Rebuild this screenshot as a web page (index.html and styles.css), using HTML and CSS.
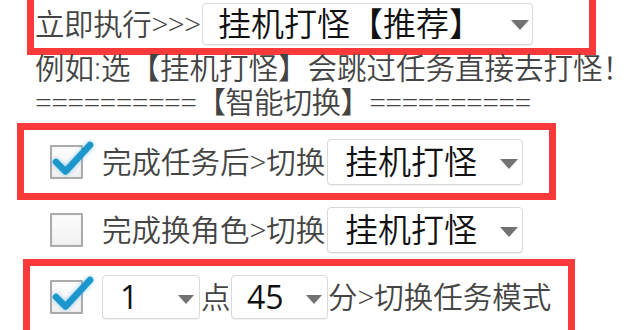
FILE: index.html
```html
<!DOCTYPE html>
<html lang="zh-CN">
<head>
<meta charset="utf-8">
<link rel="stylesheet" href="styles.css">
</head>
<body>
<div class="frame f1">
  <div class="row r1">
    <span class="lbl">立即执行&gt;&gt;&gt;</span>
    <div class="sel s-top"><span class="val">挂机打怪【推荐】</span><i class="arr"></i></div>
  </div>
</div>
<div class="line note">例如:选【挂机打怪】会跳过任务直接去打怪！</div>
<div class="line sep">==========【智能切换】==========</div>
<div class="frame f2">
  <div class="row r2">
    <span class="cb on"><svg class="tick" viewBox="0 0 44 40"><path d="M6 21 L15.5 30.5 L40 4"/></svg></span>
    <span class="lbl">完成任务后&gt;切换</span>
    <div class="sel s-mode"><span class="val">挂机打怪</span><i class="arr"></i></div>
  </div>
</div>
<div class="row r3">
  <span class="cb"></span>
  <span class="lbl">完成换角色&gt;切换</span>
  <div class="sel s-mode"><span class="val">挂机打怪</span><i class="arr"></i></div>
</div>
<div class="frame f3">
  <div class="row r4">
    <span class="cb on"><svg class="tick" viewBox="0 0 44 40"><path d="M6 21 L15.5 30.5 L40 4"/></svg></span>
    <div class="sel s-h"><span class="val num">1</span><i class="arr"></i></div>
    <span class="lbl unit">点</span>
    <div class="sel s-m"><span class="val num">45</span><i class="arr"></i></div>
    <span class="lbl">分&gt;切换任务模式</span>
  </div>
</div>
</body>
</html>
```
FILE: styles.css
```css
* { box-sizing: border-box; }
html, body { margin: 0; padding: 0; background: #fff; }
body {
  width: 639px;
  height: 330px;
  overflow: hidden;
  font-family: "Open Sans", "Noto Sans CJK SC", sans-serif;
  font-size: 29.5px;
  font-weight: 350;
  color: #444;
}
.frame {
  border: 7px solid #fa3a3a;
}
.f1 {
  margin: -8px 0 0 27px;
  width: 569px;
  height: 63px;
}
.f2 {
  margin: 4px 0 0 17px;
  width: 539px;
  height: 77px;
}
.f3 {
  margin: 0 0 0 23px;
  width: 552px;
  height: 80px;
}
.row {
  display: flex;
  align-items: center;
}
.r1 { height: 49px; padding-left: 1px; }
.r1 .lbl { width: 167px; letter-spacing: -0.4px; }
.r2 { height: 63px; padding-left: 26px; }
.r3 { height: 59px; padding-left: 50px; }
.r4 { height: 62px; padding-left: 20px; }
.lbl { white-space: nowrap; line-height: 1; }
.r2 .lbl, .r3 .lbl { width: 225px; margin-left: 19px; }
.unit { width: 31px; padding-left: 1px; }
.line {
  white-space: nowrap;
  height: 34px;
  line-height: 34px;
  padding-left: 35px;
}
.note { margin-top: -4px; }
.sep { letter-spacing: -0.7px; }

.sel {
  position: relative;
  display: flex;
  align-items: center;
  background: #fff;
  border: 1px solid #d9d9d9;
  border-radius: 4px;
  box-shadow: 0 1px 1px rgba(0,0,0,0.06);
  color: #111;
  font-size: 33px;
  white-space: nowrap;
}
.s-top { width: 331px; height: 42px; padding-left: 15px; }
.s-mode { width: 196px; height: 46px; padding-left: 17px; }
.s-h { width: 98px; height: 44px; padding-left: 17px; margin-left: 19px; }
.s-m { width: 97px; height: 44px; padding-left: 15px; }
.val { line-height: 1; }
.num { font-family: "Open Sans", sans-serif; font-size: 32px; font-weight: 400; }
.arr {
  position: absolute;
  right: 4px;
  top: 50%;
  margin-top: -3px;
  width: 0;
  height: 0;
  border-left: 9px solid transparent;
  border-right: 9px solid transparent;
  border-top: 10px solid #727272;
}
.s-top .arr { right: 3px; margin-top: -4px; }
.s-h .arr, .s-m .arr { right: 5px; margin-top: -2px; border-left-width: 8px; border-right-width: 8px; border-top-width: 9px; }

.cb {
  position: relative;
  flex: none;
  width: 33px;
  height: 34px;
  border: 2px solid #ababab;
  border-radius: 1px;
  background: linear-gradient(#fdfdfd, #f1f1f1);
  box-shadow: inset 0 0 2px rgba(0,0,0,0.08);
}
.tick {
  position: absolute;
  left: -2px;
  top: -6px;
  width: 44px;
  height: 40px;
  overflow: visible;
}
.tick path {
  fill: none;
  stroke: #1c97cc;
  stroke-width: 6.5;
  stroke-linecap: round;
  stroke-linejoin: round;
  filter: drop-shadow(0 0 2px rgba(80,180,230,0.7));
}
```
